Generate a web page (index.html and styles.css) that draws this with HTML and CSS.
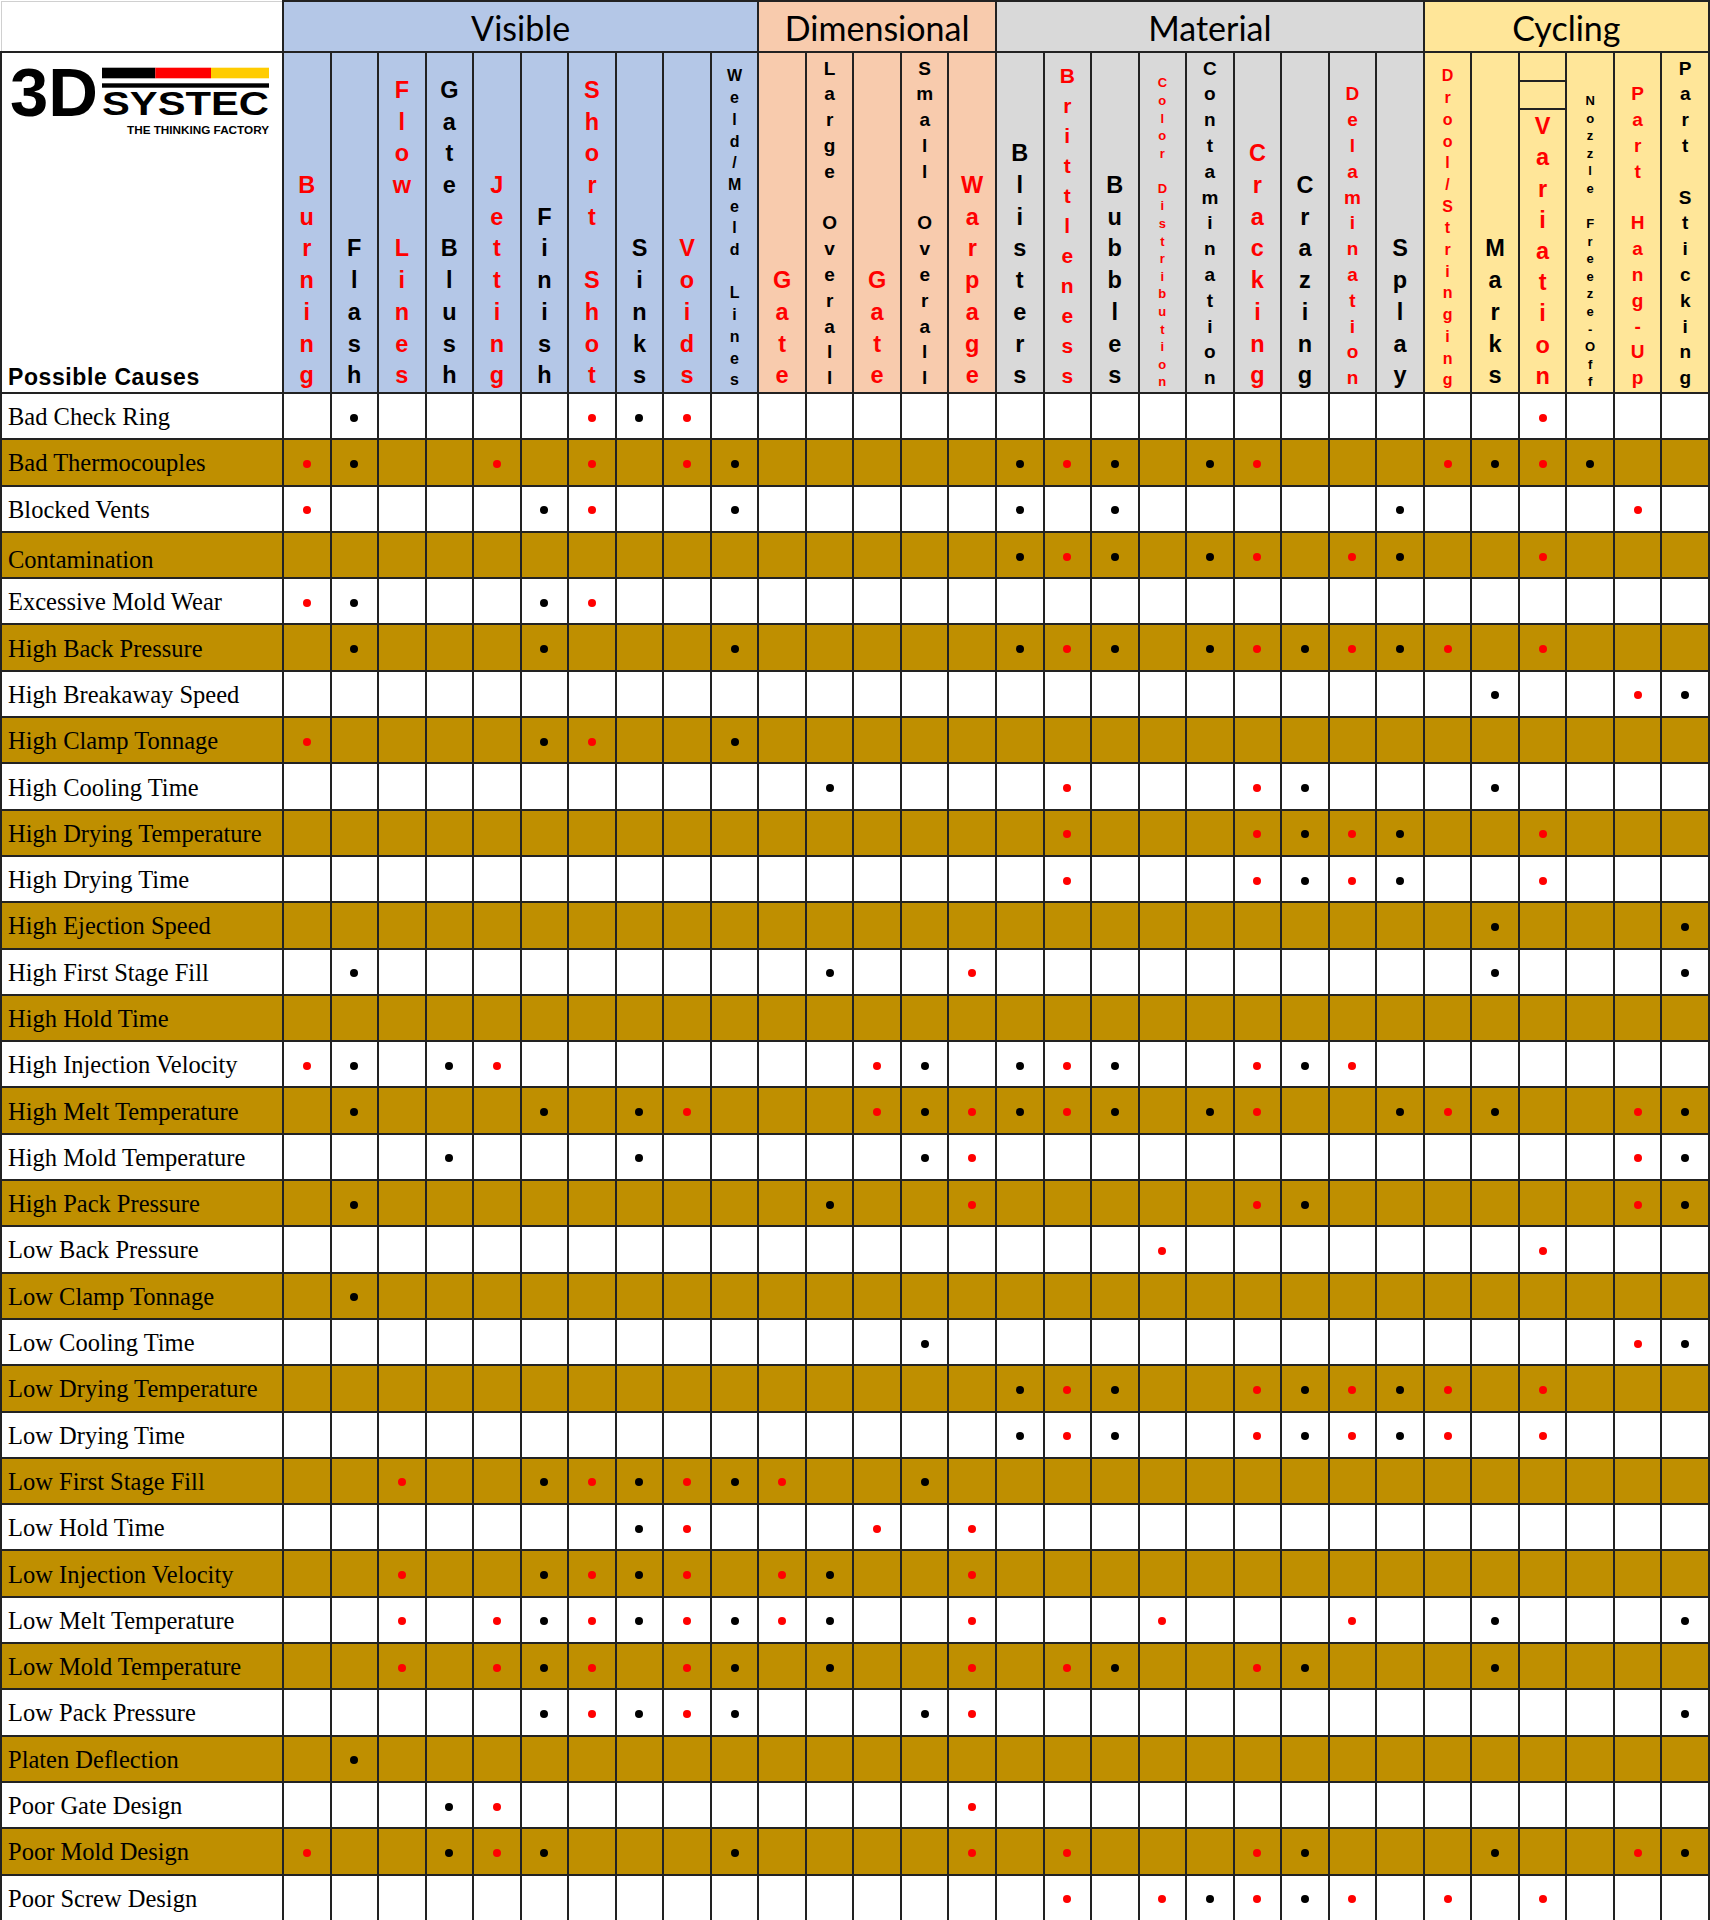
FILE: index.html
```html
<!DOCTYPE html>
<html lang="en">
<head>
<meta charset="utf-8">
<title>Possible Causes Troubleshooting Chart</title>
<link rel="stylesheet" href="styles.css">
</head>
<body>
<table class="chart">
<colgroup><col class="labcol"><col span="30"></colgroup>
<thead>
<tr class="grp">
<th class="corner"></th>
<th class="vis" colspan="10">Visible</th>
<th class="dim" colspan="5">Dimensional</th>
<th class="mat" colspan="9">Material</th>
<th class="cyc" colspan="6">Cycling</th>
</tr>
<tr class="hd">
<th class="lefthead"><div class="lh-inner">
<svg class="logo" width="262" height="84" viewBox="0 -14 262 84" aria-label="3D SYSTEC - The Thinking Factory">
<text x="0" y="49" class="lg3d" textLength="88" lengthAdjust="spacingAndGlyphs">3D</text>
<rect x="92" y="0.7" width="53.3" height="10.6" fill="#000"/>
<rect x="145.3" y="0.7" width="55.7" height="10.6" fill="#ff0000"/>
<rect x="201" y="0.7" width="58" height="10.6" fill="#ffcc00"/>
<rect x="92" y="16.3" width="167" height="4.4" fill="#000"/>
<text x="92" y="48" class="lgsys" textLength="167" lengthAdjust="spacingAndGlyphs">SYSTEC</text>
<text x="117" y="67.3" class="lgtag" textLength="142" lengthAdjust="spacingAndGlyphs">THE THINKING FACTORY</text>
</svg>
<span class="pc">Possible Causes</span></div></th>
<th class="vis L red">B<br>u<br>r<br>n<br>i<br>n<br>g</th>
<th class="vis L">F<br>l<br>a<br>s<br>h</th>
<th class="vis L red">F<br>l<br>o<br>w<br><br>L<br>i<br>n<br>e<br>s</th>
<th class="vis L">G<br>a<br>t<br>e<br><br>B<br>l<br>u<br>s<br>h</th>
<th class="vis L red">J<br>e<br>t<br>t<br>i<br>n<br>g</th>
<th class="vis L">F<br>i<br>n<br>i<br>s<br>h</th>
<th class="vis L red">S<br>h<br>o<br>r<br>t<br><br>S<br>h<br>o<br>t</th>
<th class="vis L">S<br>i<br>n<br>k<br>s</th>
<th class="vis L red">V<br>o<br>i<br>d<br>s</th>
<th class="vis S">W<br>e<br>l<br>d<br>/<br>M<br>e<br>l<br>d<br><br>L<br>i<br>n<br>e<br>s</th>
<th class="dim L red">G<br>a<br>t<br>e</th>
<th class="dim M">L<br>a<br>r<br>g<br>e<br><br>O<br>v<br>e<br>r<br>a<br>l<br>l</th>
<th class="dim L red">G<br>a<br>t<br>e</th>
<th class="dim M">S<br>m<br>a<br>l<br>l<br><br>O<br>v<br>e<br>r<br>a<br>l<br>l</th>
<th class="dim L red">W<br>a<br>r<br>p<br>a<br>g<br>e</th>
<th class="mat L">B<br>l<br>i<br>s<br>t<br>e<br>r<br>s</th>
<th class="mat B red">B<br>r<br>i<br>t<br>t<br>l<br>e<br>n<br>e<br>s<br>s</th>
<th class="mat L">B<br>u<br>b<br>b<br>l<br>e<br>s</th>
<th class="mat X red">C<br>o<br>l<br>o<br>r<br><br>D<br>i<br>s<br>t<br>r<br>i<br>b<br>u<br>t<br>i<br>o<br>n</th>
<th class="mat M">C<br>o<br>n<br>t<br>a<br>m<br>i<br>n<br>a<br>t<br>i<br>o<br>n</th>
<th class="mat L red">C<br>r<br>a<br>c<br>k<br>i<br>n<br>g</th>
<th class="mat L">C<br>r<br>a<br>z<br>i<br>n<br>g</th>
<th class="mat M red">D<br>e<br>l<br>a<br>m<br>i<br>n<br>a<br>t<br>i<br>o<br>n</th>
<th class="mat L">S<br>p<br>l<br>a<br>y</th>
<th class="cyc S red">D<br>r<br>o<br>o<br>l<br>/<br>S<br>t<br>r<br>i<br>n<br>g<br>i<br>n<br>g</th>
<th class="cyc L">M<br>a<br>r<br>k<br>s</th>
<th class="cyc var"><div class="var-in"><div class="box"></div><div class="box"></div><div class="vt L red">V<br>a<br>r<br>i<br>a<br>t<br>i<br>o<br>n</div></div></th>
<th class="cyc X">N<br>o<br>z<br>z<br>l<br>e<br><br>F<br>r<br>e<br>e<br>z<br>e<br>-<br>O<br>f<br>f</th>
<th class="cyc M red">P<br>a<br>r<br>t<br><br>H<br>a<br>n<br>g<br>-<br>U<br>p</th>
<th class="cyc M">P<br>a<br>r<br>t<br><br>S<br>t<br>i<br>c<br>k<br>i<br>n<br>g</th>
</tr>
</thead>
<tbody>
<tr><td class="lab">Bad Check Ring</td><td></td><td><i></i></td><td></td><td></td><td></td><td></td><td><i></i></td><td><i></i></td><td><i></i></td><td></td><td></td><td></td><td></td><td></td><td></td><td></td><td></td><td></td><td></td><td></td><td></td><td></td><td></td><td></td><td></td><td></td><td><i></i></td><td></td><td></td><td></td></tr>
<tr><td class="lab">Bad Thermocouples</td><td><i></i></td><td><i></i></td><td></td><td></td><td><i></i></td><td></td><td><i></i></td><td></td><td><i></i></td><td><i></i></td><td></td><td></td><td></td><td></td><td></td><td><i></i></td><td><i></i></td><td><i></i></td><td></td><td><i></i></td><td><i></i></td><td></td><td></td><td></td><td><i></i></td><td><i></i></td><td><i></i></td><td><i></i></td><td></td><td></td></tr>
<tr><td class="lab">Blocked Vents</td><td><i></i></td><td></td><td></td><td></td><td></td><td><i></i></td><td><i></i></td><td></td><td></td><td><i></i></td><td></td><td></td><td></td><td></td><td></td><td><i></i></td><td></td><td><i></i></td><td></td><td></td><td></td><td></td><td></td><td><i></i></td><td></td><td></td><td></td><td></td><td><i></i></td><td></td></tr>
<tr><td class="lab low">Contamination</td><td></td><td></td><td></td><td></td><td></td><td></td><td></td><td></td><td></td><td></td><td></td><td></td><td></td><td></td><td></td><td><i></i></td><td><i></i></td><td><i></i></td><td></td><td><i></i></td><td><i></i></td><td></td><td><i></i></td><td><i></i></td><td></td><td></td><td><i></i></td><td></td><td></td><td></td></tr>
<tr><td class="lab">Excessive Mold Wear</td><td><i></i></td><td><i></i></td><td></td><td></td><td></td><td><i></i></td><td><i></i></td><td></td><td></td><td></td><td></td><td></td><td></td><td></td><td></td><td></td><td></td><td></td><td></td><td></td><td></td><td></td><td></td><td></td><td></td><td></td><td></td><td></td><td></td><td></td></tr>
<tr><td class="lab">High Back Pressure</td><td></td><td><i></i></td><td></td><td></td><td></td><td><i></i></td><td></td><td></td><td></td><td><i></i></td><td></td><td></td><td></td><td></td><td></td><td><i></i></td><td><i></i></td><td><i></i></td><td></td><td><i></i></td><td><i></i></td><td><i></i></td><td><i></i></td><td><i></i></td><td><i></i></td><td></td><td><i></i></td><td></td><td></td><td></td></tr>
<tr><td class="lab">High Breakaway Speed</td><td></td><td></td><td></td><td></td><td></td><td></td><td></td><td></td><td></td><td></td><td></td><td></td><td></td><td></td><td></td><td></td><td></td><td></td><td></td><td></td><td></td><td></td><td></td><td></td><td></td><td><i></i></td><td></td><td></td><td><i></i></td><td><i></i></td></tr>
<tr><td class="lab">High Clamp Tonnage</td><td><i></i></td><td></td><td></td><td></td><td></td><td><i></i></td><td><i></i></td><td></td><td></td><td><i></i></td><td></td><td></td><td></td><td></td><td></td><td></td><td></td><td></td><td></td><td></td><td></td><td></td><td></td><td></td><td></td><td></td><td></td><td></td><td></td><td></td></tr>
<tr><td class="lab">High Cooling Time</td><td></td><td></td><td></td><td></td><td></td><td></td><td></td><td></td><td></td><td></td><td></td><td><i></i></td><td></td><td></td><td></td><td></td><td><i></i></td><td></td><td></td><td></td><td><i></i></td><td><i></i></td><td></td><td></td><td></td><td><i></i></td><td></td><td></td><td></td><td></td></tr>
<tr><td class="lab">High Drying Temperature</td><td></td><td></td><td></td><td></td><td></td><td></td><td></td><td></td><td></td><td></td><td></td><td></td><td></td><td></td><td></td><td></td><td><i></i></td><td></td><td></td><td></td><td><i></i></td><td><i></i></td><td><i></i></td><td><i></i></td><td></td><td></td><td><i></i></td><td></td><td></td><td></td></tr>
<tr><td class="lab">High Drying Time</td><td></td><td></td><td></td><td></td><td></td><td></td><td></td><td></td><td></td><td></td><td></td><td></td><td></td><td></td><td></td><td></td><td><i></i></td><td></td><td></td><td></td><td><i></i></td><td><i></i></td><td><i></i></td><td><i></i></td><td></td><td></td><td><i></i></td><td></td><td></td><td></td></tr>
<tr><td class="lab">High Ejection Speed</td><td></td><td></td><td></td><td></td><td></td><td></td><td></td><td></td><td></td><td></td><td></td><td></td><td></td><td></td><td></td><td></td><td></td><td></td><td></td><td></td><td></td><td></td><td></td><td></td><td></td><td><i></i></td><td></td><td></td><td></td><td><i></i></td></tr>
<tr><td class="lab">High First Stage Fill</td><td></td><td><i></i></td><td></td><td></td><td></td><td></td><td></td><td></td><td></td><td></td><td></td><td><i></i></td><td></td><td></td><td><i></i></td><td></td><td></td><td></td><td></td><td></td><td></td><td></td><td></td><td></td><td></td><td><i></i></td><td></td><td></td><td></td><td><i></i></td></tr>
<tr><td class="lab">High Hold Time</td><td></td><td></td><td></td><td></td><td></td><td></td><td></td><td></td><td></td><td></td><td></td><td></td><td></td><td></td><td></td><td></td><td></td><td></td><td></td><td></td><td></td><td></td><td></td><td></td><td></td><td></td><td></td><td></td><td></td><td></td></tr>
<tr><td class="lab">High Injection Velocity</td><td><i></i></td><td><i></i></td><td></td><td><i></i></td><td><i></i></td><td></td><td></td><td></td><td></td><td></td><td></td><td></td><td><i></i></td><td><i></i></td><td></td><td><i></i></td><td><i></i></td><td><i></i></td><td></td><td></td><td><i></i></td><td><i></i></td><td><i></i></td><td></td><td></td><td></td><td></td><td></td><td></td><td></td></tr>
<tr><td class="lab">High Melt Temperature</td><td></td><td><i></i></td><td></td><td></td><td></td><td><i></i></td><td></td><td><i></i></td><td><i></i></td><td></td><td></td><td></td><td><i></i></td><td><i></i></td><td><i></i></td><td><i></i></td><td><i></i></td><td><i></i></td><td></td><td><i></i></td><td><i></i></td><td></td><td></td><td><i></i></td><td><i></i></td><td><i></i></td><td></td><td></td><td><i></i></td><td><i></i></td></tr>
<tr><td class="lab">High Mold Temperature</td><td></td><td></td><td></td><td><i></i></td><td></td><td></td><td></td><td><i></i></td><td></td><td></td><td></td><td></td><td></td><td><i></i></td><td><i></i></td><td></td><td></td><td></td><td></td><td></td><td></td><td></td><td></td><td></td><td></td><td></td><td></td><td></td><td><i></i></td><td><i></i></td></tr>
<tr><td class="lab">High Pack Pressure</td><td></td><td><i></i></td><td></td><td></td><td></td><td></td><td></td><td></td><td></td><td></td><td></td><td><i></i></td><td></td><td></td><td><i></i></td><td></td><td></td><td></td><td></td><td></td><td><i></i></td><td><i></i></td><td></td><td></td><td></td><td></td><td></td><td></td><td><i></i></td><td><i></i></td></tr>
<tr><td class="lab">Low Back Pressure</td><td></td><td></td><td></td><td></td><td></td><td></td><td></td><td></td><td></td><td></td><td></td><td></td><td></td><td></td><td></td><td></td><td></td><td></td><td><i></i></td><td></td><td></td><td></td><td></td><td></td><td></td><td></td><td><i></i></td><td></td><td></td><td></td></tr>
<tr><td class="lab">Low Clamp Tonnage</td><td></td><td><i></i></td><td></td><td></td><td></td><td></td><td></td><td></td><td></td><td></td><td></td><td></td><td></td><td></td><td></td><td></td><td></td><td></td><td></td><td></td><td></td><td></td><td></td><td></td><td></td><td></td><td></td><td></td><td></td><td></td></tr>
<tr><td class="lab">Low Cooling Time</td><td></td><td></td><td></td><td></td><td></td><td></td><td></td><td></td><td></td><td></td><td></td><td></td><td></td><td><i></i></td><td></td><td></td><td></td><td></td><td></td><td></td><td></td><td></td><td></td><td></td><td></td><td></td><td></td><td></td><td><i></i></td><td><i></i></td></tr>
<tr><td class="lab">Low Drying Temperature</td><td></td><td></td><td></td><td></td><td></td><td></td><td></td><td></td><td></td><td></td><td></td><td></td><td></td><td></td><td></td><td><i></i></td><td><i></i></td><td><i></i></td><td></td><td></td><td><i></i></td><td><i></i></td><td><i></i></td><td><i></i></td><td><i></i></td><td></td><td><i></i></td><td></td><td></td><td></td></tr>
<tr><td class="lab">Low Drying Time</td><td></td><td></td><td></td><td></td><td></td><td></td><td></td><td></td><td></td><td></td><td></td><td></td><td></td><td></td><td></td><td><i></i></td><td><i></i></td><td><i></i></td><td></td><td></td><td><i></i></td><td><i></i></td><td><i></i></td><td><i></i></td><td><i></i></td><td></td><td><i></i></td><td></td><td></td><td></td></tr>
<tr><td class="lab">Low First Stage Fill</td><td></td><td></td><td><i></i></td><td></td><td></td><td><i></i></td><td><i></i></td><td><i></i></td><td><i></i></td><td><i></i></td><td><i></i></td><td></td><td></td><td><i></i></td><td></td><td></td><td></td><td></td><td></td><td></td><td></td><td></td><td></td><td></td><td></td><td></td><td></td><td></td><td></td><td></td></tr>
<tr><td class="lab">Low Hold Time</td><td></td><td></td><td></td><td></td><td></td><td></td><td></td><td><i></i></td><td><i></i></td><td></td><td></td><td></td><td><i></i></td><td></td><td><i></i></td><td></td><td></td><td></td><td></td><td></td><td></td><td></td><td></td><td></td><td></td><td></td><td></td><td></td><td></td><td></td></tr>
<tr><td class="lab">Low Injection Velocity</td><td></td><td></td><td><i></i></td><td></td><td></td><td><i></i></td><td><i></i></td><td><i></i></td><td><i></i></td><td></td><td><i></i></td><td><i></i></td><td></td><td></td><td><i></i></td><td></td><td></td><td></td><td></td><td></td><td></td><td></td><td></td><td></td><td></td><td></td><td></td><td></td><td></td><td></td></tr>
<tr><td class="lab">Low Melt Temperature</td><td></td><td></td><td><i></i></td><td></td><td><i></i></td><td><i></i></td><td><i></i></td><td><i></i></td><td><i></i></td><td><i></i></td><td><i></i></td><td><i></i></td><td></td><td></td><td><i></i></td><td></td><td></td><td></td><td><i></i></td><td></td><td></td><td></td><td><i></i></td><td></td><td></td><td><i></i></td><td></td><td></td><td></td><td><i></i></td></tr>
<tr><td class="lab">Low Mold Temperature</td><td></td><td></td><td><i></i></td><td></td><td><i></i></td><td><i></i></td><td><i></i></td><td></td><td><i></i></td><td><i></i></td><td></td><td><i></i></td><td></td><td></td><td><i></i></td><td></td><td><i></i></td><td><i></i></td><td></td><td></td><td><i></i></td><td><i></i></td><td></td><td></td><td></td><td><i></i></td><td></td><td></td><td></td><td></td></tr>
<tr><td class="lab">Low Pack Pressure</td><td></td><td></td><td></td><td></td><td></td><td><i></i></td><td><i></i></td><td><i></i></td><td><i></i></td><td><i></i></td><td></td><td></td><td></td><td><i></i></td><td><i></i></td><td></td><td></td><td></td><td></td><td></td><td></td><td></td><td></td><td></td><td></td><td></td><td></td><td></td><td></td><td><i></i></td></tr>
<tr><td class="lab">Platen Deflection</td><td></td><td><i></i></td><td></td><td></td><td></td><td></td><td></td><td></td><td></td><td></td><td></td><td></td><td></td><td></td><td></td><td></td><td></td><td></td><td></td><td></td><td></td><td></td><td></td><td></td><td></td><td></td><td></td><td></td><td></td><td></td></tr>
<tr><td class="lab">Poor Gate Design</td><td></td><td></td><td></td><td><i></i></td><td><i></i></td><td></td><td></td><td></td><td></td><td></td><td></td><td></td><td></td><td></td><td><i></i></td><td></td><td></td><td></td><td></td><td></td><td></td><td></td><td></td><td></td><td></td><td></td><td></td><td></td><td></td><td></td></tr>
<tr><td class="lab">Poor Mold Design</td><td><i></i></td><td></td><td></td><td><i></i></td><td><i></i></td><td><i></i></td><td></td><td></td><td></td><td><i></i></td><td></td><td></td><td></td><td></td><td><i></i></td><td></td><td><i></i></td><td></td><td></td><td></td><td><i></i></td><td><i></i></td><td></td><td></td><td></td><td><i></i></td><td></td><td></td><td><i></i></td><td><i></i></td></tr>
<tr><td class="lab">Poor Screw Design</td><td></td><td></td><td></td><td></td><td></td><td></td><td></td><td></td><td></td><td></td><td></td><td></td><td></td><td></td><td></td><td></td><td><i></i></td><td></td><td><i></i></td><td><i></i></td><td><i></i></td><td><i></i></td><td><i></i></td><td></td><td><i></i></td><td></td><td><i></i></td><td></td><td></td><td></td></tr>
</tbody>
</table>
</body>
</html>
```

FILE: styles.css
```css
html, body {
  margin: 0;
  padding: 0;
  background: #ffffff;
}

body {
  width: 1710px;
  height: 1920px;
  overflow: hidden;
}

.chart {
  border-collapse: collapse;
  table-layout: fixed;
  width: 1710px;
}

.chart .labcol {
  width: 282px;
}

.chart th,
.chart td {
  border: 2px solid #222222;
  padding: 0;
  box-sizing: border-box;
}

/* group title row */
.grp th {
  height: 51px;
  font-family: Lato, "Open Sans", sans-serif;
  font-weight: 400;
  font-size: 34px;
  color: #000000;
  text-align: center;
  vertical-align: middle;
  padding-top: 2px;
}

.grp .corner {
  background: #ffffff;
  border-top: 1px solid #d0d0d0;
  border-left: 1px solid #d0d0d0;
}

.vis { background: #b4c7e7; }
.dim { background: #f8cbad; }
.mat { background: #d9d9d9; }
.cyc { background: #ffe699; }

/* stacked header row */
.hd th {
  height: 341px;
  font-family: "Liberation Sans", Arial, sans-serif;
  font-weight: 700;
  color: #000000;
  text-align: center;
  vertical-align: bottom;
  padding-bottom: 1px;
}

.L { font-size: 23.5px; line-height: 31.7px; }
.B { font-size: 21px; line-height: 30px; }
.M { font-size: 19px; line-height: 25.8px; }
.S { font-size: 16px; line-height: 21.7px; }
.X { font-size: 13px; line-height: 17.6px; }

.hd th.L { padding-bottom: 0; }

.hd th.red,
.hd .red { color: #ff0000; }

.hd th.lefthead {
  background: #ffffff;
  vertical-align: top;
  text-align: left;
  padding: 0;
}

.lh-inner {
  height: 339px;
  box-sizing: border-box;
  display: flex;
  flex-direction: column;
  justify-content: space-between;
  padding: 0 0 1px 8px;
}

.logo {
  display: block;
}

.lg3d {
  font-family: "Liberation Sans", Arial, sans-serif;
  font-weight: 700;
  font-size: 69px;
  fill: #000000;
}

.lgsys {
  font-family: "Liberation Sans", Arial, sans-serif;
  font-weight: 700;
  font-size: 33.5px;
  fill: #000000;
}

.lgtag {
  font-family: "Liberation Sans", Arial, sans-serif;
  font-weight: 700;
  font-size: 10.2px;
  fill: #000000;
}

.pc {
  font-family: "Liberation Sans", Arial, sans-serif;
  font-weight: 700;
  font-size: 23px;
  letter-spacing: 0.6px;
  line-height: 28px;
  margin-left: -2px;
}

.hd th.var {
  vertical-align: top;
  padding: 0;
}

.var-in {
  height: 339px;
  display: flex;
  flex-direction: column;
  overflow: hidden;
}

.var-in .box {
  height: 26.5px;
  border-bottom: 2px solid #222222;
  flex: none;
}

.var-in .vt {
  flex: 1;
  display: flex;
  flex-direction: column;
  justify-content: flex-end;
  padding-bottom: 0;
  line-height: 31.2px;
}

/* data rows */
tbody tr {
  height: 46.3px;
}

tbody td {
  background: #ffffff;
  text-align: center;
  vertical-align: middle;
}

tbody tr:nth-child(even) td {
  background: #bf8f00;
}

td.lab {
  font-family: "Liberation Serif", "Times New Roman", serif;
  font-size: 24.5px;
  color: #000000;
  text-align: left;
  padding: 2px 0 0 6px;
  white-space: nowrap;
}

td.lab.low {
  vertical-align: bottom;
  padding: 0 0 3px 6px;
}

tbody td i {
  display: block;
  width: 8px;
  height: 8px;
  border-radius: 50%;
  margin: 3px auto 0;
  background: #000000;
}

tbody td:nth-child(even) i {
  background: #ff0000;
}
```
